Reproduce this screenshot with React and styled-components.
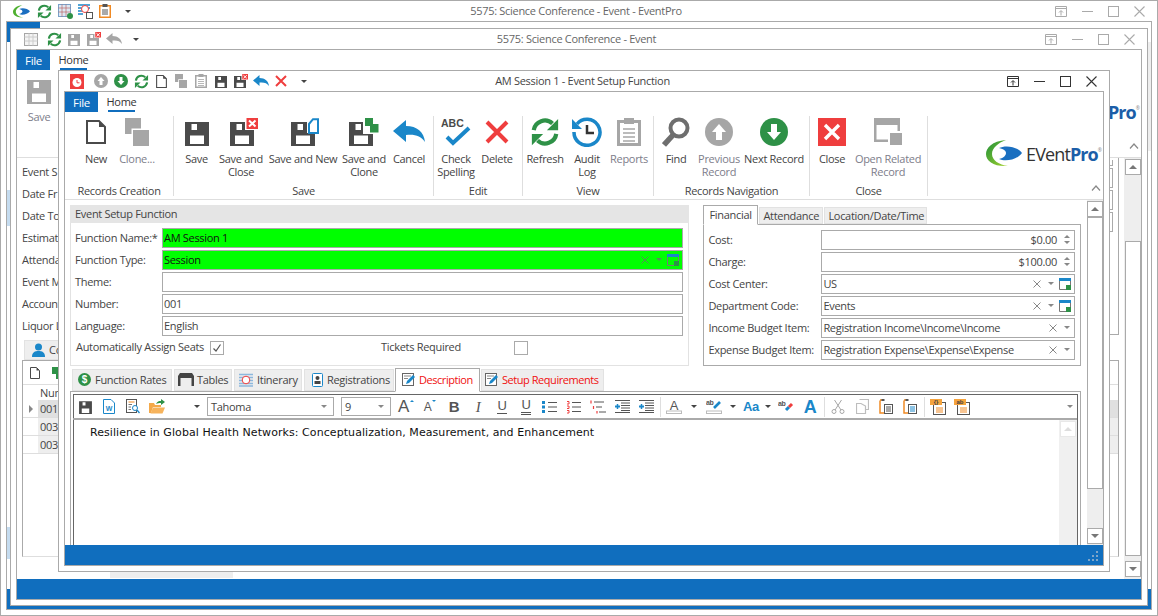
import React from 'react';
import styled, { createGlobalStyle } from 'styled-components';

const BLUE = '#106ebe';
const LINE = '#aaaaaa';
const DARK = '#4a4a4a';
const GRAY = '#a6a6a6';
const GREEN = '#2e9147';
const RED = '#ef3e3e';
const ICON_BLUE = '#1a87c9';

const GlobalStyle = createGlobalStyle`
    html, body {
        margin: 0;
        padding: 0;
        background: #fff;
        overflow: hidden;
    }
    body {
        font-family: 'Open Sans', 'Liberation Sans', sans-serif;
        font-size: 11px;
        letter-spacing: -0.3px;
        color: #444;
    }
`;

const Desktop = styled.div`
    position: relative;
    width: 1158px;
    height: 616px;
    overflow: hidden;
    background: #fff;
`;

const Win = styled.div`
    position: absolute;
    left: ${({ $x }) => $x}px;
    top: ${({ $y }) => $y}px;
    width: ${({ $w }) => $w}px;
    height: ${({ $h }) => $h}px;
    box-sizing: border-box;
    border: 1px solid ${LINE};
    background: #fff;
    padding: 0 5px 5px;
    display: flex;
    flex-direction: column;
`;

const TitleBar = styled.div`
    height: 20px;
    flex: none;
    margin: 0 -5px;
    display: grid;
    grid-template-columns: 1fr auto 1fr;
    align-items: center;
`;

const Qat = styled.div`
    display: flex;
    align-items: center;
    padding-left: ${({ $pad }) => $pad}px;
`;

const QatSlot = styled.div`
    width: 20px;
    height: 20px;
    display: flex;
    align-items: center;
    justify-content: center;
    margin-right: ${({ $mr }) => $mr || 0}px;
    margin-left: ${({ $ml }) => $ml || 0}px;
`;

const Title = styled.div`
    white-space: nowrap;
    padding-right: ${({ $shift }) => $shift || 0}px;
    padding-bottom: 2px;
    color: ${({ $dim }) => ($dim ? '#666' : '#444')};
`;

const WinButtons = styled.div`
    display: flex;
    justify-content: flex-end;
    padding-right: 4px;
`;

const WinButton = styled.div`
    width: 26.4px;
    height: 20px;
    display: flex;
    align-items: center;
    justify-content: center;
`;

const Content = styled.div`
    flex: 1;
    min-height: 0;
    border: 1px solid ${LINE};
    display: flex;
    flex-direction: column;
    background: #fff;
    overflow: hidden;
`;

const TabRow = styled.div`
    height: 20px;
    flex: none;
    display: flex;
`;

const FileTab = styled.div`
    width: 33px;
    height: 20px;
    background: ${BLUE};
    color: #fff;
    display: flex;
    align-items: center;
    justify-content: center;
    font-size: 11.5px;
`;

const HomeTab = styled.div`
    margin-left: 10px;
    width: 27px;
    height: 20px;
    box-sizing: border-box;
    border-bottom: 2px solid ${BLUE};
    display: flex;
    align-items: center;
    justify-content: center;
    padding-top: 1px;
    color: #333;
`;

const StatusBar = styled.div`
    height: 20px;
    flex: none;
    box-sizing: border-box;
    background: ${BLUE};
    display: flex;
    justify-content: flex-end;
    align-items: flex-end;
    padding: 0 4px 3px 0;
`;

const Ribbon = styled.div`
    height: 88px;
    flex: none;
    box-sizing: border-box;
    border-bottom: 1px solid #dedede;
    padding-top: 4px;
    display: flex;
    position: relative;
`;

const Group = styled.div`
    width: ${({ $w }) => $w}px;
    height: 80px;
    flex: none;
    box-sizing: border-box;
    border-right: 1px solid #dedede;
    display: flex;
    flex-direction: column;
    padding-left: ${({ $pad }) => $pad || 0}px;
`;

const GroupButtons = styled.div`
    display: flex;
    flex: none;
    height: 66px;
`;

const GroupLabel = styled.div`
    flex: none;
    line-height: 14px;
    margin-top: 2px;
    text-align: center;
    margin-left: ${({ $pad }) => -$pad || 0}px;
    color: #444;
    white-space: nowrap;
`;

const RButton = styled.div`
    width: ${({ $w }) => $w}px;
    flex: none;
    display: flex;
    flex-direction: column;
    align-items: center;
`;

const RIcon = styled.div`
    height: 32px;
    display: flex;
    align-items: center;
    justify-content: center;
    margin-left: ${({ $dx }) => $dx || 0}px;
`;

const RLabel = styled.div`
    margin-top: 4px;
    line-height: 13px;
    white-space: pre;
    text-align: center;
    color: ${({ $off }) => ($off ? '#7d7d8a' : '#444')};
`;

const LogoArea = styled.div`
    position: absolute;
    right: 1px;
    top: 28px;
    display: flex;
    align-items: center;
    gap: 4px;
`;

const LogoText = styled.div`
    font-family: 'Open Sans', sans-serif;
    font-size: 18px;
    line-height: 22px;
    letter-spacing: -0.9px;
    color: #333;
    white-space: nowrap;
    padding-top: 1px;
    b {
        color: #1c5ea8;
        font-weight: 700;
    }
    sup {
        font-size: 5px;
        color: #888;
        vertical-align: 9px;
        line-height: 0;
        letter-spacing: 0;
    }
`;

const Collapse = styled.div`
    position: absolute;
    right: 2px;
    bottom: 5px;
`;

const Body = styled.div`
    flex: 1;
    min-height: 0;
    display: flex;
    overflow: hidden;
`;

const Main = styled.div`
    flex: 1;
    min-width: 0;
    padding: 5px 6px 0 5px;
    display: flex;
    flex-direction: column;
`;

const TopRow = styled.div`
    height: 161px;
    flex: none;
    display: flex;
    gap: 14px;
`;

const SetupPanel = styled.div`
    width: 620px;
    box-sizing: border-box;
    border: 1px solid #e2e2e2;
    border-top: none;
`;

const PanelHead = styled.div`
    height: 18px;
    margin: 0 -1px;
    background: #e5e5e5;
    padding-left: 5px;
    line-height: 18px;
    color: #444;
`;

const FormGrid = styled.div`
    display: grid;
    grid-template-columns: ${({ $label }) => $label}px 1fr;
    gap: 2px 0;
    padding: ${({ $top }) => $top}px ${({ $right }) => $right}px 0 ${({ $left }) => $left}px;
    align-items: center;
`;

const FieldLabel = styled.div`
    white-space: nowrap;
    color: #444;
    padding-bottom: 2px;
`;

const Field = styled.div`
    height: 20px;
    box-sizing: border-box;
    border: 1px solid ${LINE};
    background: ${({ $green }) => ($green ? '#00ff00' : '#fff')};
    display: flex;
    align-items: center;
    padding: 0 0 1px 1px;
    color: ${({ $green }) => ($green ? '#111' : '#444')};
    white-space: nowrap;
    justify-content: ${({ $right }) => ($right ? 'flex-end' : 'flex-start')};
`;

const Adorn = styled.div`
    margin-left: auto;
    padding-right: ${({ $lookup }) => ($lookup ? 2 : 0)}px;
    display: flex;
    align-items: center;
`;

const AdornSlot = styled.div`
    width: 14px;
    height: 14px;
    display: flex;
    align-items: center;
    justify-content: center;
`;

const Spin = styled.div`
    width: 14px;
    margin-left: 3px;
    display: flex;
    flex-direction: column;
    align-items: center;
    gap: 3px;
`;

const Caret = styled.span`
    display: block;
    width: 0;
    height: 0;
    border-left: ${({ $s }) => $s || 4}px solid transparent;
    border-right: ${({ $s }) => $s || 4}px solid transparent;
    border-${({ $up }) => ($up ? 'bottom' : 'top')}: ${({ $s }) => $s || 4}px solid ${({ $c }) => $c || '#888'};
`;

const SideCaret = styled.span`
    display: block;
    width: 0;
    height: 0;
    border-top: 4px solid transparent;
    border-bottom: 4px solid transparent;
    border-left: 4px solid #888;
`;

const CheckRow = styled.div`
    display: grid;
    grid-template-columns: 134px 171px 133px 14px;
    align-items: center;
    padding: 3px 0 0 5px;
    height: 16px;
`;

const CheckBox = styled.div`
    width: 14px;
    height: 14px;
    box-sizing: border-box;
    border: 1px solid ${LINE};
    background: #fff;
    display: flex;
    align-items: center;
    justify-content: center;
`;

const SidePanel = styled.div`
    width: 378px;
    display: flex;
    flex-direction: column;
`;

const TabStrip = styled.div`
    height: ${({ $h }) => $h}px;
    flex: none;
    display: flex;
    align-items: flex-end;
    gap: ${({ $gap }) => $gap}px;
    padding-left: ${({ $pad }) => $pad || 0}px;
    margin-top: ${({ $mt }) => $mt || 0}px;
    position: relative;
    z-index: 1;
`;

const Tab = styled.div`
    width: ${({ $w }) => $w}px;
    height: ${({ $h }) => $h}px;
    box-sizing: border-box;
    flex: none;
    display: flex;
    align-items: center;
    gap: ${({ $gap }) => ($gap === undefined ? 4 : $gap)}px;
    padding-left: ${({ $pad }) => $pad}px;
    padding-bottom: 1px;
    white-space: nowrap;
    color: ${({ $red }) => ($red ? '#f01010' : '#444')};
    letter-spacing: ${({ $red }) => ($red ? -0.45 : -0.3)}px;
    background: ${({ $on }) => ($on ? '#fff' : '#eeeeee')};
    border: 1px solid ${({ $on }) => ($on ? LINE : '#e2e2e2')};
    border-bottom: ${({ $on }) => ($on ? '1px solid #fff' : '1px solid #e2e2e2')};
    margin: 0 ${({ $mx }) => $mx || 0}px ${({ $on }) => ($on ? -1 : 0)}px;
`;

const SideBox = styled.div`
    flex: 1;
    box-sizing: border-box;
    border: 1px solid ${LINE};
`;

const Pane = styled.div`
    flex: 1;
    min-height: 0;
    box-sizing: border-box;
    border: 1px solid ${LINE};
    border-bottom: none;
    padding: 2px 2px 0;
    display: flex;
`;

const EditorBox = styled.div`
    flex: 1;
    min-width: 0;
    border: 1px solid #666;
    border-bottom: none;
    display: flex;
    flex-direction: column;
`;

const Toolbar = styled.div`
    height: 25px;
    flex: none;
    box-sizing: border-box;
    border-bottom: 2px solid ${LINE};
    display: flex;
    align-items: center;
    margin-left: -1px;
`;

const ToolSlot = styled.div`
    width: ${({ $w }) => $w || 24}px;
    height: 20px;
    flex: none;
    display: flex;
    align-items: center;
    justify-content: center;
    margin-right: ${({ $mr }) => $mr || 0}px;
`;

const ToolSep = styled.div`
    width: 1px;
    height: 20px;
    background: #dedede;
    margin: 0 1px 0 2px;
`;

const Combo = styled.div`
    width: ${({ $w }) => $w}px;
    height: 19px;
    flex: none;
    box-sizing: border-box;
    border: 1px solid ${LINE};
    margin-right: ${({ $mr }) => $mr || 0}px;
    display: flex;
    align-items: center;
    justify-content: space-between;
    padding: 0 6px 1px 3px;
    color: #444;
`;

const Glyph = styled.span`
    font-family: ${({ $serif }) => ($serif ? "'Liberation Serif'" : "'Liberation Sans'")}, sans-serif;
    font-size: ${({ $size }) => $size}px;
    font-weight: ${({ $bold }) => ($bold ? 700 : 400)};
    font-style: ${({ $italic }) => ($italic ? 'italic' : 'normal')};
    color: ${({ $c }) => $c || '#555'};
    line-height: ${({ $under }) => ($under ? 14 : 18)}px;
    border-bottom: ${({ $under }) => ($under ? `${$under}px ${$under === 3 ? 'double' : 'solid'} #555` : 'none')};
`;

const SizeArrow = styled.span`
    align-self: flex-start;
    margin: 3px 0 0 1px;
`;

const EditorArea = styled.div`
    flex: 1;
    min-height: 0;
    display: flex;
`;

const EditorText = styled.div`
    flex: 1;
    padding: 5px 0 0 16px;
    font-family: 'DejaVu Sans', sans-serif;
    font-size: 11px;
    letter-spacing: 0.07px;
    line-height: 16px;
    color: #111;
    white-space: nowrap;
`;

const EditorScroll = styled.div`
    width: 18px;
    flex: none;
    background: #f0f0f0;
    padding: 1px 1px 0;
    box-sizing: border-box;
`;

const ScrollCol = styled.div`
    width: ${({ $w }) => $w}px;
    flex: none;
    background: #eeeeee;
    display: flex;
    flex-direction: column;
    align-items: center;
    padding: 1px 0 ${({ $foot }) => $foot}px;
    box-sizing: border-box;
`;

const ScrollBtn = styled.div`
    width: 16px;
    height: 16px;
    flex: none;
    box-sizing: border-box;
    background: #fff;
    border: 1px solid ${({ $off }) => ($off ? '#e8e8e8' : LINE)};
    display: flex;
    align-items: center;
    justify-content: center;
`;

const ScrollThumb = styled.div`
    width: 16px;
    height: ${({ $h }) => $h}px;
    flex: none;
    box-sizing: border-box;
    background: #fff;
    border: 1px solid ${LINE};
    margin-top: ${({ $mt }) => $mt || 0}px;
`;

const Spacer = styled.div`
    flex: 1;
`;

/* windows behind the front one */
const BackSide = styled.div`
    flex: 1;
    min-width: 0;
    display: flex;
    flex-direction: column;
`;

const BackTop = styled.div`
    height: 182px;
    flex: none;
    display: flex;
    justify-content: space-between;
`;

const BackLabels = styled.div`
    padding: 3px 0 0 5px;
`;

const BackLabel = styled.div`
    height: 22px;
    line-height: 22px;
    white-space: nowrap;
`;

const BackPanel = styled.div`
    width: 120px;
    height: 177px;
    margin-right: 5px;
    box-sizing: border-box;
    border-right: 1px solid ${LINE};
    border-bottom: 1px solid ${LINE};
    padding: 2px 5px 0 0;
    display: flex;
    flex-direction: column;
    gap: 2px;
`;

const BackField = styled.div`
    height: ${({ $h }) => $h}px;
    box-sizing: border-box;
    border: 1px solid ${LINE};
    ${({ $open }) => ($open ? 'border-top: none;' : '')}
`;

const BackTabs = styled.div`
    height: 20px;
    flex: none;
    padding-left: 7px;
    display: flex;
`;

const BackGrid = styled.div`
    height: 197px;
    flex: none;
    margin: 0 5px;
    box-sizing: border-box;
    border: 1px solid ${LINE};
    border-bottom: 1px solid #dedede;
`;

const GridTools = styled.div`
    height: 24px;
    box-sizing: border-box;
    border-bottom: 1px solid #dedede;
    padding-left: 7px;
    display: flex;
    align-items: center;
    gap: 12px;
`;

const GridRow = styled.div`
    height: ${({ $h }) => $h}px;
    box-sizing: border-box;
    display: flex;
    border-bottom: 1px solid ${({ $nol }) => ($nol ? 'transparent' : '#dedede')};
`;

const GridMark = styled.div`
    width: 15px;
    flex: none;
    display: flex;
    align-items: center;
    justify-content: center;
`;

const GridCell = styled.div`
    flex: 1;
    padding-left: 2px;
    background: ${({ $bg }) => $bg || 'transparent'};
    display: flex;
    align-items: center;
`;

const BackBar = styled.div`
    width: 123px;
    height: 6px;
    margin: 15px 0 0 93px;
    background: #eeeeee;
`;

const OuterBody = styled.div`
    flex: 1;
    min-height: 0;
    display: flex;
    justify-content: space-between;
`;

const NavStrip = styled.div`
    width: 3px;
    display: flex;
    flex-direction: column;
    padding-top: 148px;
`;

const NavMark = styled.div`
    height: ${({ $h }) => $h}px;
    margin-top: ${({ $mt }) => $mt || 0}px;
    background: #c5dcf0;
`;

const OuterThumb = styled.div`
    width: 3px;
    height: 109px;
    background: #eeeeee;
`;

/* ------- drawings ------- */

const SaveShape = ({ c = DARK, x = 0, y = 0 }) => (
    <path
        transform={`translate(${x} ${y})`}
        fill={c}
        fillRule="evenodd"
        d="M0 0H24V24H0Z M6.500 2V8H12V2Z M5 13.500V24H19V13.500Z M5 22H19V24H5Z"
    />
);

const SaveIcon = ({ s = 28, c = DARK }) => (
    <svg width={s} height={s} viewBox="0 0 28 28">
        <SaveShape c={c} y={4} x={2} />
    </svg>
);

const SaveCloseIcon = ({ s = 28, c = DARK }) => (
    <svg width={s} height={s} viewBox="0 0 28 28">
        <SaveShape c={c} y={4} />
        <rect x="15" y="0" width="13" height="12" fill="#fff" />
        <rect x="16.500" y="0" width="11.500" height="11" fill={RED} />
        <path d="M19 2.500 25.500 8.500M25.500 2.500 19 8.500" stroke="#fff" strokeWidth="2" />
    </svg>
);

const SaveNewIcon = () => (
    <svg width="28" height="28" viewBox="0 0 28 28">
        <SaveShape y={4} />
        <rect x="16" y="0" width="12" height="15" fill="#fff" />
        <path d="M18 6 22 1.200H27V15H18Z" fill="#fff" stroke={ICON_BLUE} strokeWidth="2" />
    </svg>
);

const SaveCloneIcon = () => (
    <svg width="30" height="28" viewBox="0 0 30 28">
        <SaveShape y={4} />
        <rect x="14" y="0" width="16" height="16" fill="#fff" />
        <rect x="16" y="0" width="8" height="8" fill={GREEN} />
        <rect x="21" y="6" width="8.500" height="8.500" fill={GREEN} />
    </svg>
);

const DocIcon = ({ w = 20, h = 24 }) => (
    <svg width={w} height={h} viewBox="0 0 20 24">
        <path d="M1 1H13L19 7V23H1Z" fill="#fff" stroke={DARK} strokeWidth="2" />
        <path d="M13 1 19 7H13Z" fill={DARK} />
    </svg>
);

const CloneIcon = ({ s = 28 }) => (
    <svg width={s} height={s} viewBox="0 0 28 28">
        <rect x="2" y="0" width="16" height="16" fill={GRAY} />
        <rect x="8.500" y="10.500" width="19" height="18" fill="#fff" />
        <rect x="10" y="12" width="16" height="16" fill={GRAY} />
    </svg>
);

const CancelIcon = ({ w = 32, h = 24, c = ICON_BLUE }) => (
    <svg width={w} height={h} viewBox="0 0 32 24">
        <path d="M0 11 13 0V6C24 6 31 12 32 22 28 16 22 14 13 15V22Z" fill={c} />
    </svg>
);

const SpellIcon = () => (
    <svg width="30" height="30" viewBox="0 0 30 30">
        <text x="0" y="9.500" fontFamily="Liberation Sans" fontWeight="700" fontSize="10.500" letterSpacing="0" fill="#4a4a4a">ABC</text>
        <path d="M6 20 12 26 28 11" fill="none" stroke={ICON_BLUE} strokeWidth="4" />
    </svg>
);

const CrossIcon = ({ s = 24, c = RED, w = 4 }) => (
    <svg width={s} height={s} viewBox="0 0 24 24">
        <path d="M2 2 22 22M22 2 2 22" stroke={c} strokeWidth={w} />
    </svg>
);

const RefreshIcon = ({ s = 30 }) => (
    <svg width={s} height={s} viewBox="0 0 32 32">
        <path d="M4 14A12 12 0 0 1 24 7" fill="none" stroke={GREEN} strokeWidth="4.500" />
        <path d="M30 2V14H18Z" fill={GREEN} />
        <path d="M28 18A12 12 0 0 1 8 25" fill="none" stroke={GREEN} strokeWidth="4.500" />
        <path d="M2 30V18H14Z" fill={GREEN} />
    </svg>
);

const AuditIcon = () => (
    <svg width="30" height="30" viewBox="0 0 30 30">
        <path d="M5 7A13 13 0 1 1 2 15" fill="none" stroke={ICON_BLUE} strokeWidth="3.500" />
        <path d="M0 2V12H10Z" fill={ICON_BLUE} />
        <path d="M15 8V16H22" fill="none" stroke="#333" strokeWidth="2.500" />
    </svg>
);

const ClipIcon = ({ w = 24, h = 28, c = GRAY, line = GRAY }) => (
    <svg width={w} height={h} viewBox="0 0 24 28">
        <rect x="1.500" y="3.500" width="21" height="23" fill="none" stroke={c} strokeWidth="3" />
        <rect x="7" y="0" width="10" height="6" fill={c} />
        <path d="M6 11H18M6 15H18M6 19H18M6 23H18" stroke={line} strokeWidth="1.600" />
    </svg>
);

const FindIcon = () => (
    <svg width="28" height="30" viewBox="0 0 28 30">
        <circle cx="17" cy="11" r="8.500" fill="none" stroke="#6e6e6e" strokeWidth="4" />
        <path d="M11 18 2 28" stroke="#6e6e6e" strokeWidth="5.500" />
    </svg>
);

const RoundArrow = ({ s = 28, c = GRAY, down }) => (
    <svg width={s} height={s} viewBox="0 0 28 28">
        <circle cx="14" cy="14" r="14" fill={c} />
        <path
            transform={down ? 'rotate(180 14 14)' : undefined}
            d="M14 6 21 14H17V22H11V14H7Z"
            fill="#fff"
        />
    </svg>
);

const CloseSquare = () => (
    <svg width="28" height="28" viewBox="0 0 28 28">
        <rect width="28" height="28" fill={RED} />
        <path d="M7 7 21 21M21 7 7 21" stroke="#fff" strokeWidth="3.400" />
    </svg>
);

const RelatedIcon = () => (
    <svg width="28" height="28" viewBox="0 0 28 28">
        <path fillRule="evenodd" d="M0 0H26V24H0Z M2.500 7V21.500H23.500V7Z" fill={GRAY} />
        <rect x="14" y="13" width="14" height="15" fill="#fff" />
        <rect x="16" y="15" width="12" height="12" fill={GRAY} />
    </svg>
);

const Logo = () => (
    <LogoArea>
        <svg width="36" height="27" viewBox="0 0 36 27">
            <defs>
                <linearGradient id="lg" x1="0" y1="0" x2="1" y2="1">
                    <stop offset="0" stopColor="#1d8f3a" />
                    <stop offset="1" stopColor="#a5d32c" />
                </linearGradient>
            </defs>
            <path d="M20 0C6 1 0 8 0 14 0 21 8 27 22 26 13 25 6 20 6 14 6 8 12 3 20 0Z" fill="url(#lg)" />
            <path d="M13 8C19 5 31 6 36 13 31 20 19 22 13 19 18 18 20 15 20 13 20 11 18 9 13 8Z" fill="#1a6fc0" />
        </svg>
        <LogoText>
            EVent<b>Pro</b>
            <sup>®</sup>
        </LogoText>
    </LogoArea>
);

const Chevron = () => (
    <svg width="10" height="6" viewBox="0 0 10 6">
        <path d="M1 5.500 5 1 9 5.500" fill="none" stroke="#888" strokeWidth="1.200" />
    </svg>
);

const RestoreGlyph = ({ c }) => (
    <svg width="12" height="11" viewBox="0 0 12 11">
        <path d="M.5.5H11.500V10.500H.5ZM.5 2.500H11.500" fill="none" stroke={c} />
        <path d="M6 9.500V5M4 6.500 6 4.500 8 6.500" fill="none" stroke={c} />
    </svg>
);

const MinGlyph = ({ c }) => (
    <svg width="11" height="11" viewBox="0 0 11 11">
        <path d="M0 5.500H11" stroke={c} />
    </svg>
);

const MaxGlyph = ({ c }) => (
    <svg width="11" height="11" viewBox="0 0 11 11">
        <rect x=".5" y=".5" width="10" height="10" fill="none" stroke={c} />
    </svg>
);

const CloseGlyph = ({ c }) => (
    <svg width="11" height="11" viewBox="0 0 11 11">
        <path d="M.5.5 10.500 10.500M10.500.5 .5 10.500" stroke={c} strokeWidth="1.100" />
    </svg>
);

const WindowButtons = ({ c }) => (
    <WinButtons>
        <WinButton><RestoreGlyph c={c} /></WinButton>
        <WinButton><MinGlyph c={c} /></WinButton>
        <WinButton><MaxGlyph c={c} /></WinButton>
        <WinButton><CloseGlyph c={c} /></WinButton>
    </WinButtons>
);

const Swoosh = () => (
    <svg width="17" height="13" viewBox="0 0 36 27">
        <path d="M20 0C6 1 0 8 0 14 0 21 8 27 22 26 13 25 6 20 6 14 6 8 12 3 20 0Z" fill="#4fb030" />
        <path d="M13 8C19 5 31 6 36 13 31 20 19 22 13 19 18 18 20 15 20 13 20 11 18 9 13 8Z" fill="#1a6fc0" />
    </svg>
);

const GridGear = () => (
    <svg width="15" height="15" viewBox="0 0 15 15">
        <rect x=".5" y=".5" width="12" height="12" fill="#dce8f4" stroke="#7aa0c8" />
        <path d="M.5 4H12.500M.5 8H12.500M4 .5V12.500M8 .5V12.500" stroke="#b55" strokeWidth=".6" />
        <circle cx="12" cy="12" r="3" fill={GREEN} />
    </svg>
);

const CalendarClock = () => (
    <svg width="15" height="16" viewBox="0 0 15 16">
        <path d="M0 2H12M0 5H12M0 8H5M0 11H5" stroke={ICON_BLUE} strokeWidth="1.600" />
        <circle cx="7" cy="6" r="3.500" fill="#fff" stroke={RED} />
        <rect x="8.500" y="9.500" width="6" height="6" fill="#fff" stroke="#555" />
    </svg>
);

const OrangeClip = () => (
    <svg width="12" height="14" viewBox="0 0 12 14">
        <rect x=".75" y="1.750" width="10.500" height="11.500" fill="none" stroke="#f08a24" strokeWidth="1.500" />
        <rect x="3.500" y="0" width="5" height="3" fill="#555" />
        <path d="M3 6H9M3 8H9M3 10H9" stroke="#555" />
    </svg>
);

const GrayTable = () => (
    <svg width="14" height="13" viewBox="0 0 14 13">
        <rect x=".5" y=".5" width="13" height="12" fill="#f4f4f4" stroke={GRAY} />
        <path d="M.5 4H13.500M.5 8H13.500M5 .5V12.500M9 .5V12.500" stroke="#ccc" />
    </svg>
);

const RedClock = () => (
    <svg width="14" height="15" viewBox="0 0 14 15">
        <rect width="14" height="15" fill={RED} />
        <circle cx="7" cy="8.500" r="4.500" fill="#fff" />
        <path d="M7 6V8.800H9.500" fill="none" stroke={RED} />
    </svg>
);

const LookupIcon = ({ c = ICON_BLUE }) => (
    <svg width="12" height="12" viewBox="0 0 12 12">
        <path d="M.5 2.500H11.500V11.500H.5Z" fill="none" stroke="#777" />
        <rect width="12" height="3" fill={c} />
        <rect x="7" y="7" width="5" height="5" fill={GREEN} />
    </svg>
);

const SmallX = ({ c = '#888' }) => (
    <svg width="8" height="8" viewBox="0 0 8 8">
        <path d="M.5.5 7.500 7.500M7.500.5 .5 7.500" stroke={c} />
    </svg>
);

const Tick = () => (
    <svg width="10" height="10" viewBox="0 0 10 10">
        <path d="M1.500 5.500 4 8 8.500 1.500" fill="none" stroke="#555" strokeWidth="1.200" />
    </svg>
);

const DollarIcon = () => (
    <svg width="13" height="13" viewBox="0 0 13 13">
        <circle cx="6.500" cy="6.500" r="6.500" fill={GREEN} />
        <text x="6.500" y="10" textAnchor="middle" fontFamily="Liberation Sans" fontWeight="700" fontSize="10" fill="#fff">$</text>
    </svg>
);

const TableIcon = () => (
    <svg width="16" height="13" viewBox="0 0 16 13">
        <path d="M2 0H14L16 3V13H13.500V5H2.500V13H0V3Z" fill="#444" />
    </svg>
);

const ItineraryIcon = () => (
    <svg width="14" height="14" viewBox="0 0 14 14">
        <path d="M0 1.500H14M0 4.500H14M0 7.500H14M0 10.500H14M0 13H14" stroke="#8db8dd" strokeWidth="1.500" />
        <circle cx="7" cy="7" r="3.800" fill="#fff" stroke={RED} />
    </svg>
);

const BadgeIcon = () => (
    <svg width="11" height="14" viewBox="0 0 11 14">
        <rect x=".5" y=".5" width="10" height="13" rx="1" fill="#fff" stroke={ICON_BLUE} />
        <circle cx="5.500" cy="5" r="2" fill="#444" />
        <rect x="2.500" y="8" width="6" height="3" fill="#444" />
    </svg>
);

const NoteIcon = () => (
    <svg width="13" height="13" viewBox="0 0 13 13">
        <rect x=".5" y=".5" width="11" height="12" fill="#fff" stroke="#666" />
        <path d="M2 3H9M2 5.500H6" stroke="#888" />
        <path d="M4 11 5 8 11 2 13 4 7 10Z" fill={ICON_BLUE} />
    </svg>
);

const PersonIcon = () => (
    <svg width="13" height="14" viewBox="0 0 13 14">
        <circle cx="6.500" cy="4" r="3.500" fill={ICON_BLUE} />
        <path d="M0 14C0 9 3 8 6.500 8S13 9 13 14Z" fill={ICON_BLUE} />
    </svg>
);

const WordIcon = () => (
    <svg width="12" height="15" viewBox="0 0 12 15">
        <path d="M.5.5H8L11.500 4V14.500H.5Z" fill="#fff" stroke={ICON_BLUE} />
        <text x="6" y="11.500" textAnchor="middle" fontFamily="Liberation Sans" fontWeight="700" fontSize="7" fill={ICON_BLUE}>W</text>
    </svg>
);

const PreviewIcon = () => (
    <svg width="14" height="15" viewBox="0 0 14 15">
        <rect x=".5" y=".5" width="10" height="13" fill="#fff" stroke="#555" />
        <path d="M2.500 3H8.500" stroke="#f08a24" />
        <path d="M2.500 5.500H6M2.500 8H5M2.500 10.500H5" stroke="#777" />
        <circle cx="9" cy="9" r="2.500" fill="#fff" stroke={ICON_BLUE} />
        <path d="M11 11 13.500 14" stroke={ICON_BLUE} strokeWidth="1.300" />
    </svg>
);

const FolderIcon = () => (
    <svg width="16" height="15" viewBox="0 0 16 15">
        <path d="M0 4H5L6 6H12V8H4L2 14H0Z" fill="#f4a94a" />
        <path d="M4 8.500H16L13.500 14.500H1.500Z" fill="#f6b35c" />
        <path d="M7 5C8 2.500 10 2 12 2V0L16 3 12 6V4C10 4 8.500 4 7 5Z" fill={GREEN} />
    </svg>
);

const ListIcon = ({ c = ICON_BLUE, kind }) => (
    <svg width="16" height="14" viewBox="0 0 16 14">
        {kind === 'bullet' && <path d="M1.500 1V4M1.500 5.500V8.500M1.500 10V13" stroke={c} strokeWidth="3" />}
        {kind === 'num' && <path d="M1 1.500H3V4H1M1 6H3V8.500H1M1 10.500H3V13H1" fill="none" stroke={c} />}
        {kind === 'multi' && <path d="M1 .5V3.500M3.500 6V9M7 11V13.500" fill="none" stroke={c} strokeWidth="1.200" />}
        {kind === 'multi' ? (
            <path d="M4 2H14M6 7H12M9 12H16" stroke="#555" />
        ) : (
            <path d="M6 2.500H15M6 7H15M6 11.500H15" stroke="#555" />
        )}
    </svg>
);

const IndentIcon = () => (
    <svg width="15" height="13" viewBox="0 0 15 13">
        <path d="M0 .5H15M6 3H15M6 5.500H15M6 8H15M6 10.500H15M0 12.500H15" stroke="#555" />
        <path d="M0 6.500H5" stroke={ICON_BLUE} strokeWidth="2" />
        <path d="M2.500 4V9" stroke={ICON_BLUE} strokeWidth="1.500" />
    </svg>
);

const ColorA = () => (
    <svg width="16" height="15" viewBox="0 0 16 15">
        <text x="8" y="10.500" textAnchor="middle" fontFamily="Liberation Sans" fontSize="13" fill="#555">A</text>
        <rect x=".5" y="12" width="15" height="2.500" fill="#fff" stroke="#bbb" />
    </svg>
);

const HighlightIcon = () => (
    <svg width="16" height="15" viewBox="0 0 16 15">
        <text x="0" y="6" fontFamily="Liberation Sans" fontWeight="700" fontSize="7" fill="#555">ab</text>
        <path d="M8 9 14 3" stroke={ICON_BLUE} strokeWidth="2.600" />
        <rect x=".5" y="12" width="15" height="2.500" fill="#fff" stroke="#bbb" />
    </svg>
);

const EraserIcon = () => (
    <svg width="16" height="13" viewBox="0 0 16 13">
        <text x="0" y="6" fontFamily="Liberation Sans" fontWeight="700" fontSize="7" fill="#555">ab</text>
        <path d="M8 10 11 7" stroke={ICON_BLUE} strokeWidth="3" />
        <path d="M11 7 14 4" stroke={RED} strokeWidth="3" />
    </svg>
);

const ScissorsIcon = () => (
    <svg width="14" height="14" viewBox="0 0 14 14">
        <circle cx="3" cy="11.500" r="2" fill="none" stroke={GRAY} />
        <circle cx="11" cy="11.500" r="2" fill="none" stroke={GRAY} />
        <path d="M4 10 10.500 0M10 10 3.500 0" stroke={GRAY} />
    </svg>
);

const CopyIcon = () => (
    <svg width="13" height="15" viewBox="0 0 13 15">
        <path d="M3.500.5H12.500V10.500H10" fill="none" stroke="#bdbdbd" strokeWidth="1.200" />
        <path d="M.5 4.500H5L9.500 7V14.500H.5Z" fill="#fff" stroke="#bdbdbd" strokeWidth="1.200" />
    </svg>
);

const PasteIcon = ({ c = '#555' }) => (
    <svg width="14" height="15" viewBox="0 0 14 15">
        <path d="M1 1.500V14H5M1 1H5" fill="none" stroke="#f08a24" strokeWidth="1.500" />
        <rect x="2.500" y="0" width="3" height="2" fill="#555" />
        <rect x="5.500" y="5.500" width="8" height="9" fill="#fff" stroke="#555" />
        <path d="M7 8H12M7 10H12M7 12H12" stroke={c} />
    </svg>
);

const TagDocIcon = ({ tag }) => (
    <svg width="16" height="16" viewBox="0 0 16 16">
        <rect x="3.500" y="3.500" width="12" height="12" fill="#fff" stroke="#555" />
        <path d="M6 9H13M6 11H13M6 13H13" stroke="#f08a24" />
        <rect x="0" y="0" width="12" height="6" fill="#f5a33c" />
        <text x="6" y="5" textAnchor="middle" fontFamily="Liberation Sans" fontWeight="700" fontSize="6" letterSpacing="0" fill="#444">{tag}</text>
    </svg>
);

const Grip = () => (
    <svg width="12" height="11" viewBox="0 0 12 11">
        <path d="M9 0H11V2H9ZM5 4H7V6H5ZM9 4H11V6H9ZM1 8H3V10H1ZM5 8H7V10H5ZM9 8H11V10H9Z" fill="#7fa6c9" />
    </svg>
);

const RibbonButton = ({ w, icon, off, dx, children }) => (
    <RButton $w={w}>
        <RIcon $dx={dx}>{icon}</RIcon>
        <RLabel $off={off}>{children}</RLabel>
    </RButton>
);

const GroupOf = ({ w, pad, label, children }) => (
    <Group $w={w} $pad={pad}>
        <GroupButtons>{children}</GroupButtons>
        <GroupLabel $pad={pad}>{label}</GroupLabel>
    </Group>
);

const LookupField = ({ children, lookup, green }) => (
    <Field $green={green}>
        {children}
        <Adorn $lookup={lookup}>
            <AdornSlot><SmallX c={green ? '#5a8a5a' : '#888'} /></AdornSlot>
            <AdornSlot><Caret $s={3} $c={green ? '#5a8a5a' : '#888'} /></AdornSlot>
            {lookup && <AdornSlot><LookupIcon /></AdornSlot>}
        </Adorn>
    </Field>
);

const MoneyField = ({ children }) => (
    <Field $right>
        {children}
        <Spin>
            <Caret $s={3} $up />
            <Caret $s={3} />
        </Spin>
    </Field>
);

function OuterWindow() {
    return (
        <Win $x={0} $y={0} $w={1158} $h={616}>
            <TitleBar>
                <Qat $pad={10}>
                    <QatSlot $mr={3}><Swoosh /></QatSlot>
                    <QatSlot><RefreshIcon s={15} /></QatSlot>
                    <QatSlot $ml={1}><GridGear /></QatSlot>
                    <QatSlot><CalendarClock /></QatSlot>
                    <QatSlot><OrangeClip /></QatSlot>
                    <QatSlot $ml={3}><Caret $s={3} $c="#444" /></QatSlot>
                </Qat>
                <Title $dim $shift={6}>5575: Science Conference - Event - EventPro</Title>
                <WindowButtons c="#aaa" />
            </TitleBar>
            <Content>
                <TabRow>
                    <FileTab>File</FileTab>
                </TabRow>
                <OuterBody>
                    <NavStrip>
                        <NavMark $h={36} />
                        <NavMark $h={32} $mt={301} />
                    </NavStrip>
                    <OuterThumb />
                </OuterBody>
                <StatusBar />
            </Content>
        </Win>
    );
}

function EventWindow() {
    return (
        <Win $x={10} $y={28} $w={1138} $h={578}>
            <TitleBar>
                <Qat $pad={10}>
                    <QatSlot $mr={3}><GrayTable /></QatSlot>
                    <QatSlot><RefreshIcon s={15} /></QatSlot>
                    <QatSlot><SaveIcon s={14} c={GRAY} /></QatSlot>
                    <QatSlot><SaveCloseIcon s={14} c={GRAY} /></QatSlot>
                    <QatSlot><CancelIcon w={16} h={12} c={GRAY} /></QatSlot>
                    <QatSlot $ml={2}><Caret $s={3} $c="#444" /></QatSlot>
                </Qat>
                <Title $dim $shift={5}>5575: Science Conference - Event</Title>
                <WindowButtons c="#aaa" />
            </TitleBar>
            <Content>
                <TabRow>
                    <FileTab>File</FileTab>
                    <HomeTab>Home</HomeTab>
                </TabRow>
                <Ribbon>
                    <RibbonButton w={44} off icon={<SaveIcon c={GRAY} />}>Save</RibbonButton>
                    <Logo />
                    <Collapse><Chevron /></Collapse>
                </Ribbon>
                <Body>
                    <BackSide>
                        <BackTop>
                            <BackLabels>
                                <BackLabel>Event S</BackLabel>
                                <BackLabel>Date Fr</BackLabel>
                                <BackLabel>Date To</BackLabel>
                                <BackLabel>Estimate</BackLabel>
                                <BackLabel>Attenda</BackLabel>
                                <BackLabel>Event M</BackLabel>
                                <BackLabel>Account</BackLabel>
                                <BackLabel>Liquor L</BackLabel>
                            </BackLabels>
                            <BackPanel>
                                <BackField $h={6} $open />
                                <BackField $h={20} />
                                <BackField $h={20} />
                                <BackField $h={20} />
                            </BackPanel>
                        </BackTop>
                        <BackTabs>
                            <Tab $w={100} $h={20} $pad={7}><PersonIcon />Co</Tab>
                        </BackTabs>
                        <BackGrid>
                            <GridTools>
                                <DocIcon w={10} h={12} />
                                <svg width="10" height="12" viewBox="0 0 10 12">
                                    <rect width="6" height="7" fill={GREEN} />
                                    <rect x="4" y="5" width="6" height="7" fill={GREEN} />
                                </svg>
                            </GridTools>
                            <GridRow $h={15} $nol>
                                <GridMark />
                                <GridCell>Num</GridCell>
                            </GridRow>
                            <GridRow $h={18}>
                                <GridMark><SideCaret /></GridMark>
                                <GridCell $bg="#e0e0e0">001</GridCell>
                            </GridRow>
                            <GridRow $h={18}>
                                <GridMark />
                                <GridCell $bg="#eeeeee">003</GridCell>
                            </GridRow>
                            <GridRow $h={18}>
                                <GridMark />
                                <GridCell $bg="#eeeeee">003</GridCell>
                            </GridRow>
                        </BackGrid>
                        <BackBar />
                    </BackSide>
                    <ScrollCol $w={17} $foot={2}>
                        <ScrollBtn><Caret $s={4} $c="#777" $up /></ScrollBtn>
                        <ScrollThumb $h={315} $mt={66} />
                        <Spacer />
                        <ScrollBtn><Caret $s={4} $c="#777" /></ScrollBtn>
                    </ScrollCol>
                </Body>
                <StatusBar />
            </Content>
        </Win>
    );
}

function FunctionWindow() {
    return (
        <Win $x={58} $y={70} $w={1052} $h={502}>
            <TitleBar>
                <Qat $pad={8}>
                    <QatSlot $mr={4}><RedClock /></QatSlot>
                    <QatSlot><RoundArrow s={14} /></QatSlot>
                    <QatSlot><RoundArrow s={14} c={GREEN} down /></QatSlot>
                    <QatSlot><RefreshIcon s={15} /></QatSlot>
                    <QatSlot><DocIcon w={11} h={13} /></QatSlot>
                    <QatSlot><CloneIcon s={14} /></QatSlot>
                    <QatSlot><ClipIcon w={12} h={14} /></QatSlot>
                    <QatSlot><SaveIcon s={14} /></QatSlot>
                    <QatSlot><SaveCloseIcon s={14} /></QatSlot>
                    <QatSlot><CancelIcon w={16} h={12} /></QatSlot>
                    <QatSlot><CrossIcon s={12} /></QatSlot>
                    <QatSlot $ml={3}><Caret $s={3} $c="#444" /></QatSlot>
                </Qat>
                <Title $shift={3}>AM Session 1 - Event Setup Function</Title>
                <WindowButtons c="#333" />
            </TitleBar>
            <Content>
                <TabRow>
                    <FileTab>File</FileTab>
                    <HomeTab>Home</HomeTab>
                </TabRow>
                <Ribbon>
                    <GroupOf w={109} pad={11} label="Records Creation">
                        <RibbonButton w={40} icon={<DocIcon />}>New</RibbonButton>
                        <RibbonButton w={42} off icon={<CloneIcon />}>Clone...</RibbonButton>
                    </GroupOf>
                    <GroupOf w={260} pad={6} label="Save">
                        <RibbonButton w={33} icon={<SaveIcon />}>Save</RibbonButton>
                        <RibbonButton w={56} dx={6} icon={<SaveCloseIcon />}>{'Save and\nClose'}</RibbonButton>
                        <RibbonButton w={68} dx={4} icon={<SaveNewIcon />}>Save and New</RibbonButton>
                        <RibbonButton w={54} icon={<SaveCloneIcon />}>{'Save and\nClone'}</RibbonButton>
                        <RibbonButton w={36} icon={<CancelIcon />}>Cancel</RibbonButton>
                    </GroupOf>
                    <GroupOf w={89} pad={1} label="Edit">
                        <RibbonButton w={42} icon={<SpellIcon />}>{'Check\nSpelling'}</RibbonButton>
                        <RibbonButton w={40} icon={<CrossIcon />}>Delete</RibbonButton>
                    </GroupOf>
                    <GroupOf w={131} label="View">
                        <RibbonButton w={44} icon={<RefreshIcon />}>Refresh</RibbonButton>
                        <RibbonButton w={40} icon={<AuditIcon />}>{'Audit\nLog'}</RibbonButton>
                        <RibbonButton w={44} off icon={<ClipIcon />}>Reports</RibbonButton>
                    </GroupOf>
                    <GroupOf w={156} label="Records Navigation">
                        <RibbonButton w={44} icon={<FindIcon />}>Find</RibbonButton>
                        <RibbonButton w={42} off icon={<RoundArrow />}>{'Previous\nRecord'}</RibbonButton>
                        <RibbonButton w={68} icon={<RoundArrow c={GREEN} down />}>Next Record</RibbonButton>
                    </GroupOf>
                    <GroupOf w={118} label="Close">
                        <RibbonButton w={44} icon={<CloseSquare />}>Close</RibbonButton>
                        <RibbonButton w={68} off icon={<RelatedIcon />}>{'Open Related\nRecord'}</RibbonButton>
                    </GroupOf>
                    <Logo />
                    <Collapse><Chevron /></Collapse>
                </Ribbon>
                <Body>
                    <Main>
                        <TopRow>
                            <SetupPanel>
                                <PanelHead>Event Setup Function</PanelHead>
                                <FormGrid $label={87} $top={5} $right={5} $left={4}>
                                    <FieldLabel>Function Name:*</FieldLabel>
                                    <Field $green>AM Session 1</Field>
                                    <FieldLabel>Function Type:</FieldLabel>
                                    <LookupField green lookup>Session</LookupField>
                                    <FieldLabel>Theme:</FieldLabel>
                                    <Field />
                                    <FieldLabel>Number:</FieldLabel>
                                    <Field>001</Field>
                                    <FieldLabel>Language:</FieldLabel>
                                    <Field>English</Field>
                                </FormGrid>
                                <CheckRow>
                                    <FieldLabel>Automatically Assign Seats</FieldLabel>
                                    <CheckBox><Tick /></CheckBox>
                                    <FieldLabel>Tickets Required</FieldLabel>
                                    <CheckBox />
                                </CheckRow>
                            </SetupPanel>
                            <SidePanel>
                                <TabStrip $h={19} $gap={1}>
                                    <Tab $on $w={55} $h={20} $pad={5}>Financial</Tab>
                                    <Tab $w={64} $h={17} $pad={3}>Attendance</Tab>
                                    <Tab $w={103} $h={17} $pad={3}>Location/Date/Time</Tab>
                                </TabStrip>
                                <SideBox>
                                    <FormGrid $label={113} $top={5} $right={5} $left={4}>
                                        <FieldLabel>Cost:</FieldLabel>
                                        <MoneyField>$0.00</MoneyField>
                                        <FieldLabel>Charge:</FieldLabel>
                                        <MoneyField>$100.00</MoneyField>
                                        <FieldLabel>Cost Center:</FieldLabel>
                                        <LookupField lookup>US</LookupField>
                                        <FieldLabel>Department Code:</FieldLabel>
                                        <LookupField lookup>Events</LookupField>
                                        <FieldLabel>Income Budget Item:</FieldLabel>
                                        <LookupField>Registration Income\Income\Income</LookupField>
                                        <FieldLabel>Expense Budget Item:</FieldLabel>
                                        <LookupField>Registration Expense\Expense\Expense</LookupField>
                                    </FormGrid>
                                </SideBox>
                            </SidePanel>
                        </TopRow>
                        <TabStrip $h={22} $gap={2} $pad={2} $mt={3}>
                            <Tab $w={100} $h={22} $pad={5}><DollarIcon />Function Rates</Tab>
                            <Tab $w={58} $h={22} $pad={3} $gap={3}><TableIcon />Tables</Tab>
                            <Tab $w={68} $h={22} $pad={4}><ItineraryIcon />Itinerary</Tab>
                            <Tab $w={90} $h={22} $pad={7}><BadgeIcon />Registrations</Tab>
                            <Tab $on $red $w={85} $h={24} $pad={6} $mx={-1}><NoteIcon />Description</Tab>
                            <Tab $red $w={123} $h={22} $pad={3}><NoteIcon />Setup Requirements</Tab>
                        </TabStrip>
                        <Pane>
                            <EditorBox>
                                <Toolbar>
                                    <ToolSlot><SaveIcon s={15} /></ToolSlot>
                                    <ToolSlot><WordIcon /></ToolSlot>
                                    <ToolSlot><PreviewIcon /></ToolSlot>
                                    <ToolSlot><FolderIcon /></ToolSlot>
                                    <ToolSlot />
                                    <ToolSlot $w={8} $mr={6}><Caret $s={3} $c="#444" /></ToolSlot>
                                    <Combo $w={127} $mr={7}>Tahoma<Caret $s={3} /></Combo>
                                    <Combo $w={50} $mr={3}>9<Caret $s={3} /></Combo>
                                    <ToolSlot>
                                        <Glyph $size={17}>A</Glyph>
                                        <SizeArrow><Caret $s={2} $c={ICON_BLUE} $up /></SizeArrow>
                                    </ToolSlot>
                                    <ToolSlot>
                                        <Glyph $size={12}>A</Glyph>
                                        <SizeArrow><Caret $s={2} $c={ICON_BLUE} /></SizeArrow>
                                    </ToolSlot>
                                    <ToolSlot><Glyph $size={15} $bold>B</Glyph></ToolSlot>
                                    <ToolSlot><Glyph $size={15} $italic $serif>I</Glyph></ToolSlot>
                                    <ToolSlot><Glyph $size={13} $under={1}>U</Glyph></ToolSlot>
                                    <ToolSlot><Glyph $size={13} $under={3}>U</Glyph></ToolSlot>
                                    <ToolSlot><ListIcon kind="bullet" /></ToolSlot>
                                    <ToolSlot><ListIcon kind="num" c={RED} /></ToolSlot>
                                    <ToolSlot><ListIcon kind="multi" c={RED} /></ToolSlot>
                                    <ToolSlot><IndentIcon /></ToolSlot>
                                    <ToolSlot><IndentIcon /></ToolSlot>
                                    <ToolSep />
                                    <ToolSlot><ColorA /></ToolSlot>
                                    <ToolSlot $w={16}><Caret $s={3} $c="#444" /></ToolSlot>
                                    <ToolSlot><HighlightIcon /></ToolSlot>
                                    <ToolSlot $w={14}><Caret $s={3} $c="#444" /></ToolSlot>
                                    <ToolSlot $w={22}><Glyph $size={13} $bold $c={ICON_BLUE}>Aa</Glyph></ToolSlot>
                                    <ToolSlot $w={12}><Caret $s={3} $c="#444" /></ToolSlot>
                                    <ToolSlot><EraserIcon /></ToolSlot>
                                    <ToolSlot><Glyph $size={18} $bold $c={ICON_BLUE}>A</Glyph></ToolSlot>
                                    <ToolSep />
                                    <ToolSlot><ScissorsIcon /></ToolSlot>
                                    <ToolSlot><CopyIcon /></ToolSlot>
                                    <ToolSlot><PasteIcon /></ToolSlot>
                                    <ToolSlot><PasteIcon c={ICON_BLUE} /></ToolSlot>
                                    <ToolSep />
                                    <ToolSlot><TagDocIcon tag="{}" /></ToolSlot>
                                    <ToolSlot><TagDocIcon tag="ab" /></ToolSlot>
                                    <Spacer />
                                    <ToolSlot $w={14}><Caret $s={3} /></ToolSlot>
                                </Toolbar>
                                <EditorArea>
                                    <EditorText>Resilience in Global Health Networks: Conceptualization, Measurement, and Enhancement</EditorText>
                                    <EditorScroll><ScrollBtn $off><Caret $s={4} $c="#ddd" $up /></ScrollBtn></EditorScroll>
                                </EditorArea>
                            </EditorBox>
                        </Pane>
                    </Main>
                    <ScrollCol $w={16} $foot={1}>
                        <ScrollBtn><Caret $s={4} $c="#777" $up /></ScrollBtn>
                        <ScrollThumb $h={272} />
                        <Spacer />
                        <ScrollBtn><Caret $s={4} $c="#777" /></ScrollBtn>
                    </ScrollCol>
                </Body>
                <StatusBar><Grip /></StatusBar>
            </Content>
        </Win>
    );
}

export default function App() {
    return (
        <>
            <GlobalStyle />
            <Desktop>
                <OuterWindow />
                <EventWindow />
                <FunctionWindow />
            </Desktop>
        </>
    );
}
